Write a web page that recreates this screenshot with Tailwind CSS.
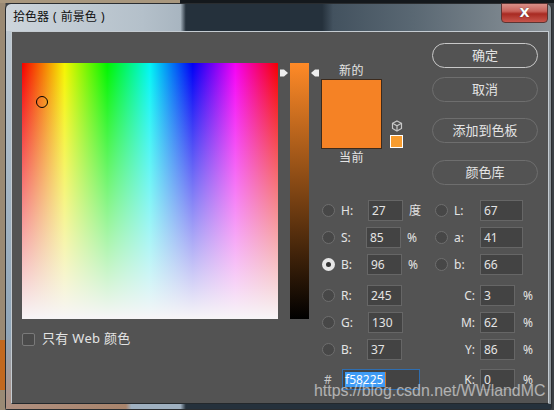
<!DOCTYPE html>
<html lang="zh">
<head>
<meta charset="UTF-8">
<title>拾色器</title>
<script src="https://cdn.jsdelivr.net/npm/@tailwindcss/browser@4"></script>
</head>
<body class="w-[554px] h-[410px] overflow-hidden bg-[#8d7c66] font-['Noto_Sans','Noto_Sans_CJK_SC',sans-serif] text-[12px] text-[#e4e4e4]">
<div class="relative w-[554px] h-[410px] pt-[3px] pl-[5px] bg-[linear-gradient(90deg,#9a8a74_0px,#9a8a74_5px,#3a3f44_6px,#3a3f44_554px)]">
  <!-- desktop behind the window -->
  <div class="absolute left-0 top-0 w-[180px] h-[3px] bg-[#a8977e]"></div>
  <div class="absolute left-[180px] top-0 w-[374px] h-[3px] bg-[#14181c]"></div>
  <div class="absolute left-0 top-[340px] w-[5px] h-[50px] bg-[#c2691f]"></div>

  <!-- window frame -->
  <div class="relative w-[547px] h-[407px] rounded-t-[6px] rounded-b-[3px] border border-[#2a2d30] bg-[linear-gradient(90deg,#cdd5dc_0%,#b4c0ca_25%,#a8b5c0_32%,#25313c_33%,#25313c_58%,#43525f_60%,#5a6873_75%,#8d959b_100%)]">
    <div class="h-[27px] pl-[7px] pt-[3px] text-[12px] [word-spacing:1px] text-[#111] leading-[20px]">拾色器 ( 前景色 )</div>
    <!-- close button -->
    <div class="absolute right-[3px] top-[-1px] w-[47px] h-[20px] rounded-b-[4px] border border-[#5c3533] bg-[linear-gradient(180deg,#d98f88_0%,#c8625a_40%,#a82a22_55%,#c7564c_100%)] flex items-center justify-center text-white font-bold text-[13px] [text-shadow:0_0_1px_#333] font-['DejaVu_Sans',sans-serif]">X</div>
    <!-- lower part of the left frame edge -->
    <div class="absolute left-0 top-[27px] bottom-0 w-[5px] bg-[linear-gradient(180deg,#bcc7d0_0%,#8fa5b8_80%,#b09080_100%)]"></div>

    <!-- dialog body -->
    <div class="flex w-[538px] h-[373px] ml-[5px] border border-[#c4cbd1] border-b-[#23282c] bg-[#535353] pl-[10px] pt-[31px] relative">
      <!-- colour field -->
      <div class="shrink-0 w-[256px]">
        <div class="relative w-[256px] h-[256px] bg-[linear-gradient(180deg,transparent_0%,#f7f5f7_100%),linear-gradient(90deg,#f50000_0%,#f5f500_16.67%,#00f500_33.33%,#00f5f5_50%,#0000f5_66.67%,#f500f5_83.33%,#f50000_100%)]">
          <div class="absolute left-[14px] top-[33px] w-[12px] h-[12px] rounded-full border border-black"></div>
        </div>
        <div class="flex items-center mt-[13px] h-[14px]">
          <div class="w-[13px] h-[13px] rounded-[2px] border border-[#7a7a7a] bg-[#4a4a4a]"></div>
          <span class="ml-[7px] text-[13px] tracking-[0.3px]">只有 Web 颜色</span>
        </div>
      </div>

      <!-- hue slider -->
      <div class="shrink-0 relative ml-[12px] w-[19px] h-[256px] bg-[linear-gradient(180deg,#ff8a27_0%,#000_100%)]">
        <svg class="absolute left-[-10px] top-[6px]" width="8" height="8" viewBox="0 0 8 8"><path d="M0 0.5h4l4 3.5-4 3.5h-4z" fill="#eee"/></svg>
        <svg class="absolute right-[-10px] top-[6px]" width="8" height="8" viewBox="0 0 8 8"><path d="M8 0.5h-4l-4 3.5 4 3.5h4z" fill="#eee"/></svg>
      </div>

      <!-- preview and fields -->
      <div class="shrink-0 ml-[12px] w-[110px]">
        <div class="w-[61px] text-center h-[16px] leading-[16px] text-[12px] tracking-[0.5px]">新的</div>
        <div class="flex items-end">
          <div class="w-[61px] h-[70px] bg-[#f58225] border border-[#3c2a1c]"></div>
          <div class="ml-[8px] mb-[1px] w-[14px]">
            <svg class="ml-[1px]" width="12" height="12" viewBox="0 0 12 12" fill="none" stroke="#c8c8c8" stroke-width="1.2"><path d="M6 1l4.5 2.3v5.2L6 11 1.5 8.500V3.300z"/><path d="M1.500 3.300L6 5.800l4.500-2.500M6 5.800V11"/></svg>
            <div class="mt-[3px] w-[13px] h-[13px] bg-[#f89c2e] border border-white"></div>
          </div>
        </div>
        <div class="w-[61px] text-center h-[18px] leading-[18px] text-[12px] tracking-[0.5px]">当前</div>
      </div>

      <!-- buttons -->
      <div class="absolute left-[420px] top-[11px] w-[106px] flex flex-col items-stretch text-[13px]">
        <div class="h-[25px] rounded-full border-[1.5px] border-[#c8c8c8] flex items-center justify-center">确定</div>
        <div class="mt-[9px] h-[25px] rounded-full border border-[#6e6e6e] flex items-center justify-center">取消</div>
        <div class="mt-[16px] h-[25px] rounded-full border border-[#6e6e6e] flex items-center justify-center">添加到色板</div>
        <div class="mt-[17px] h-[25px] rounded-full border border-[#6e6e6e] flex items-center justify-center">颜色库</div>
      </div>

      <!-- value fields -->
      <div class="absolute left-[310px] top-[168px] w-[226px] flex flex-col gap-y-[6px]">
        <div class="flex items-center h-[21px]">
          <div class="w-[13px] h-[13px] rounded-full border border-[#6e6e6e] bg-[#474747]"></div>
          <span class="ml-[6px] w-[27px]">H:</span>
          <div class="w-[35px] h-[21px] pl-[3px] leading-[20px] border border-[#666] bg-[#434343]">27</div>
          <span class="ml-[6px] w-[26px]">度</span>
          <div class="w-[13px] h-[13px] rounded-full border border-[#6e6e6e] bg-[#474747]"></div>
          <span class="ml-[6px] w-[26px]">L:</span>
          <div class="w-[43px] h-[21px] pl-[3px] leading-[20px] border border-[#666] bg-[#434343]">67</div>
        </div>
        <div class="flex items-center h-[21px]">
          <div class="w-[13px] h-[13px] rounded-full border border-[#6e6e6e] bg-[#474747]"></div>
          <span class="ml-[6px] w-[25px]">S:</span>
          <div class="w-[35px] h-[21px] pl-[3px] leading-[20px] border border-[#666] bg-[#434343]">85</div>
          <span class="ml-[6px] w-[28px]">%</span>
          <div class="w-[13px] h-[13px] rounded-full border border-[#6e6e6e] bg-[#474747]"></div>
          <span class="ml-[6px] w-[26px]">a:</span>
          <div class="w-[43px] h-[21px] pl-[3px] leading-[20px] border border-[#666] bg-[#434343]">41</div>
        </div>
        <div class="flex items-center h-[21px]">
          <div class="w-[13px] h-[13px] rounded-full bg-[#e6e6e6] flex items-center justify-center"><div class="w-[5px] h-[5px] rounded-full bg-[#333]"></div></div>
          <span class="ml-[6px] w-[26px]">B:</span>
          <div class="w-[35px] h-[21px] pl-[3px] leading-[20px] border border-[#666] bg-[#434343]">96</div>
          <span class="ml-[6px] w-[27px]">%</span>
          <div class="w-[13px] h-[13px] rounded-full border border-[#6e6e6e] bg-[#474747]"></div>
          <span class="ml-[6px] w-[26px]">b:</span>
          <div class="w-[43px] h-[21px] pl-[3px] leading-[20px] border border-[#666] bg-[#434343]">66</div>
        </div>
        <div class="flex items-center h-[21px] mt-[4px]">
          <div class="w-[13px] h-[13px] rounded-full border border-[#6e6e6e] bg-[#474747]"></div>
          <span class="ml-[6px] w-[26px]">R:</span>
          <div class="w-[35px] h-[21px] pl-[3px] leading-[20px] border border-[#666] bg-[#434343]">245</div>
          <span class="w-[73px] text-right">C:</span>
          <div class="ml-[5px] w-[35px] h-[21px] pl-[3px] leading-[20px] border border-[#666] bg-[#434343]">3</div>
          <span class="ml-[8px]">%</span>
        </div>
        <div class="flex items-center h-[21px]">
          <div class="w-[13px] h-[13px] rounded-full border border-[#6e6e6e] bg-[#474747]"></div>
          <span class="ml-[6px] w-[27px]">G:</span>
          <div class="w-[35px] h-[21px] pl-[3px] leading-[20px] border border-[#666] bg-[#434343]">130</div>
          <span class="w-[72px] text-right">M:</span>
          <div class="ml-[5px] w-[35px] h-[21px] pl-[3px] leading-[20px] border border-[#666] bg-[#434343]">62</div>
          <span class="ml-[8px]">%</span>
        </div>
        <div class="flex items-center h-[21px]">
          <div class="w-[13px] h-[13px] rounded-full border border-[#6e6e6e] bg-[#474747]"></div>
          <span class="ml-[6px] w-[26px]">B:</span>
          <div class="w-[35px] h-[21px] pl-[3px] leading-[20px] border border-[#666] bg-[#434343]">37</div>
          <span class="w-[73px] text-right">Y:</span>
          <div class="ml-[5px] w-[35px] h-[21px] pl-[3px] leading-[20px] border border-[#666] bg-[#434343]">86</div>
          <span class="ml-[8px]">%</span>
        </div>
        <div class="flex items-center h-[21px] mt-[3px]">
          <span class="ml-[1px] w-[17px] pl-[1px] text-[#c8c8c8]">#</span>
          <div class="ml-[2px] w-[78px] h-[21px] px-[2px] py-[2px] border border-[#2f6eb0] bg-[#434343] leading-[15px]"><span class="block w-[41px] bg-[#3e9bf5] border-r border-[#c8742a] text-white">f58225</span></div>
          <span class="w-[55px] text-right">K:</span>
          <div class="ml-[5px] w-[35px] h-[21px] pl-[3px] leading-[20px] border border-[#666] bg-[#434343]">0</div>
          <span class="ml-[8px]">%</span>
        </div>
      </div>
    </div>

    <!-- bottom edge of the frame -->
    <div class="h-[5px] bg-[linear-gradient(90deg,#b09080_0%,#a8846c_22%,#9fb0c0_23%,#9fb0c0_32%,#25313c_33%,#25313c_100%)]"></div>
  </div>
  <!-- csdn watermark -->
  <div class="absolute left-[314px] top-[381px] text-[15.9px] leading-[20px] text-white/55 font-['Liberation_Sans',sans-serif] whitespace-nowrap">https://blog.csdn.net/WWlandMC</div>
</div>
</body>
</html>
